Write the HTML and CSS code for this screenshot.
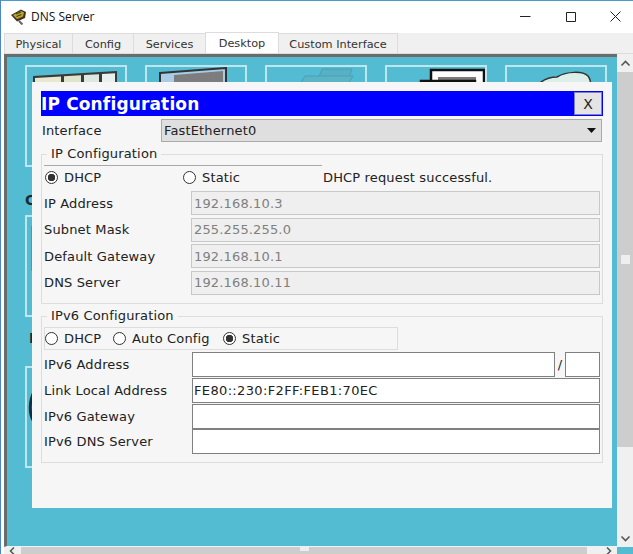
FILE: index.html
```html
<!DOCTYPE html>
<html lang="en">
<head>
    <meta charset="UTF-8">
    <title>DNS Server</title>
    <link rel="stylesheet" href="styles.css">
</head>
<body>
<div class="window">

    <!-- Title bar -->
    <div class="titlebar">
        <svg class="app-icon" width="17" height="17" viewBox="0 0 17 17">
            <path d="M9 13l3.5 3.5" stroke="#6b6156" stroke-width="2" fill="none"/>
            <path d="M1 7l10-5.500 5 2.500-1 6-8 3.500z" fill="#3a3226"/>
            <path d="M3 7l8-4 3 1.500-1 4-6 2.500z" fill="#c9a227"/>
            <path d="M6 6l5-2M6.500 8.500l5-2" stroke="#2d4a1e" stroke-width="1.300" fill="none"/>
        </svg>
        <span class="window-title">DNS Server</span>
        <div class="window-controls">
            <svg width="11" height="11" viewBox="0 0 11 11"><path d="M0 5.500h10.500" stroke="#222" fill="none"/></svg>
            <svg width="11" height="11" viewBox="0 0 11 11"><path d="M1.500 1.500h9v9h-9z" stroke="#222" fill="none"/></svg>
            <svg width="11" height="11" viewBox="0 0 11 11"><path d="M.5.500l10 10M10.500.500l-10 10" stroke="#222" fill="none"/></svg>
        </div>
    </div>

    <!-- Tabs -->
    <div class="tabs">
        <div class="tab tab-physical">Physical</div>
        <div class="tab tab-config">Config</div>
        <div class="tab tab-services">Services</div>
        <div class="tab tab-desktop">Desktop</div>
        <div class="tab tab-custom">Custom Interface</div>
    </div>

    <div class="frame">
        <div class="desktop">
            <div class="tile-row">
                <div class="tile">
                    <svg class="tile-art" viewBox="0 0 98 30">
                        <path d="M6 9L90 4V30H6z" fill="#3a3a3a"/>
                        <path d="M8 11L34 9.500V30H8z" fill="#e8e8cf"/>
                        <path d="M37 9.300L54 8.300V30H37z" fill="#e0e4cc"/>
                        <path d="M57 8.100L72 7.200V30H57z" fill="#dde9e0"/>
                        <path d="M75 7L88 6.200V30H75z" fill="#e8f0f0"/>
                    </svg>
                </div>
                <div class="tile">
                    <svg class="tile-art" viewBox="0 0 98 30">
                        <path d="M13 6L79 1V30H13z" fill="#a9cbe6" stroke="#333" stroke-width="2"/>
                        <path d="M27 8L76 4V30H27z" fill="#7d7d80"/>
                    </svg>
                </div>
                <div class="tile">
                    <svg class="tile-art" viewBox="0 0 98 30">
                        <path d="M55 2h30l-4 13H50z" fill="#57b0c4" stroke="#45a3b7"/>
                        <path d="M38 9h48l-5 8H33z" fill="#5cb3c6" stroke="#45a3b7"/>
                    </svg>
                </div>
                <div class="tile">
                    <svg class="tile-art" viewBox="0 0 98 30">
                        <path d="M44 3h53v27H44z" fill="#fff" stroke="#111" stroke-width="2.500"/>
                        <path d="M51 10h38v20H51z" fill="#7a7a78"/>
                        <path d="M34 14h54v16H34z" fill="#fff" stroke="#111" stroke-width="2.500"/>
                    </svg>
                </div>
                <div class="tile">
                    <svg class="tile-art" viewBox="0 0 98 30">
                        <path d="M23 30C28 17 38 10 50 10C60 4 76 4 81 9C85 14 84 24 83 30z" fill="#dcefe9" stroke="#333" stroke-width="1.500"/>
                        <path d="M27 30C34 20 44 15 54 15V30z" fill="#a8d4c6"/>
                    </svg>
                </div>
            </div>
            <div class="section-title section-title-first">C</div>
            <div class="tile-row">
                <div class="tile">
                    <svg class="tile-art" viewBox="0 0 98 98">
                        <path d="M6 9v45" stroke="#3a7f8f" stroke-width="3"/>
                    </svg>
                </div>
            </div>
            <div class="section-title section-title-second">I</div>
            <div class="tile-row">
                <div class="tile">
                    <svg class="tile-art" viewBox="0 0 98 98">
                        <path d="M7 24C2 34 2 46 7 54" stroke="#0f2f45" stroke-width="3" fill="none"/>
                    </svg>
                </div>
            </div>
        </div>

        <div class="vscroll">
            <div class="scroll-btn">
                <svg width="11" height="7" viewBox="0 0 11 7"><path d="M1.500 5.500l4-4 4 4" stroke="#555" stroke-width="1.600" fill="none"/></svg>
            </div>
            <div class="vscroll-thumb"><span class="vscroll-grip"></span></div>
            <div class="vscroll-rest"></div>
            <div class="scroll-btn">
                <svg width="11" height="7" viewBox="0 0 11 7"><path d="M1.500 1.500l4 4 4-4" stroke="#555" stroke-width="1.600" fill="none"/></svg>
            </div>
        </div>

        <div class="hscroll">
            <div class="hscroll-btn">
                <svg width="7" height="7" viewBox="0 0 7 7"><path d="M5 .500L1.500 4 5 7.500" stroke="#555" stroke-width="1.500" fill="none"/></svg>
            </div>
            <div class="hscroll-thumb"><span class="hscroll-grip"></span></div>
            <div class="hscroll-rest"></div>
            <div class="hscroll-btn">
                <svg width="7" height="7" viewBox="0 0 7 7"><path d="M2 .500L5.500 4 2 7.500" stroke="#555" stroke-width="1.500" fill="none"/></svg>
            </div>
        </div>
        <div class="corner"></div>

        <!-- IP Configuration dialog, sits over the desktop -->
        <div class="dialog">
            <div class="dialog-title">
                <span>IP Configuration</span>
                <button class="dialog-close">X</button>
            </div>

            <div class="interface-row">
                <label class="interface-label">Interface</label>
                <div class="select">
                    <span>FastEthernet0</span>
                    <svg width="9" height="5" viewBox="0 0 9 5"><path d="M0 0h9L4.500 5z" fill="#111"/></svg>
                </div>
            </div>

            <fieldset class="group group-v4">
                <legend>IP Configuration</legend>
                <div class="legend-rule"></div>
                <div class="mode-row">
                    <label class="mode mode-dhcp"><input type="radio" name="v4" class="radio" checked>DHCP</label>
                    <label class="mode mode-static"><input type="radio" name="v4" class="radio">Static</label>
                    <span class="status">DHCP request successful.</span>
                </div>
                <div class="field"><label>IP Address</label><input class="input-off" value="192.168.10.3" readonly></div>
                <div class="field"><label>Subnet Mask</label><input class="input-off" value="255.255.255.0" readonly></div>
                <div class="field"><label>Default Gateway</label><input class="input-off" value="192.168.10.1" readonly></div>
                <div class="field"><label>DNS Server</label><input class="input-off" value="192.168.10.11" readonly></div>
            </fieldset>

            <fieldset class="group group-v6">
                <legend>IPv6 Configuration</legend>
                <div class="mode-panel">
                    <label class="mode mode-v6-dhcp"><input type="radio" name="v6" class="radio">DHCP</label>
                    <label class="mode mode-v6-auto"><input type="radio" name="v6" class="radio">Auto Config</label>
                    <label class="mode"><input type="radio" name="v6" class="radio" checked>Static</label>
                </div>
                <div class="field field-v6">
                    <label>IPv6 Address</label>
                    <div class="address-pair">
                        <input class="input-on address-main">
                        <span class="slash">/</span>
                        <input class="input-on address-prefix">
                    </div>
                </div>
                <div class="field field-v6"><label>Link Local Address</label><input class="input-on" value="FE80::230:F2FF:FEB1:70EC"></div>
                <div class="field field-v6"><label>IPv6 Gateway</label><input class="input-on"></div>
                <div class="field field-v6"><label>IPv6 DNS Server</label><input class="input-on"></div>
            </fieldset>
        </div>
    </div>
</div>
</body>
</html>
```

FILE: styles.css
```css
html, body {
    margin: 0;
    padding: 0;
    height: 100%;
    overflow: hidden;
    background: #ffffff;
}

/* Outer window */
.window {
    width: 633px;
    height: 554px;
    box-sizing: border-box;
    border-top: 1px solid #4a9bd0;
    border-left: 1px solid #4a86c8;
    display: flex;
    flex-direction: column;
    background: #ffffff;
    font-family: "DejaVu Sans", Verdana, sans-serif;
    font-size: 13px;
    letter-spacing: 0.15px;
    color: #222222;
}

/* Title bar */
.titlebar {
    height: 31px;
    flex: none;
    display: flex;
    align-items: center;
    padding-left: 9px;
}

.app-icon {
    margin-right: 4px;
}

.window-title {
    font-family: "Open Sans", sans-serif;
    font-size: 12px;
    letter-spacing: 0;
    color: #111111;
}

.window-controls {
    margin-left: auto;
    display: flex;
    gap: 34px;
    padding-right: 12px;
}

/* Tabs */
.tabs {
    height: 21px;
    flex: none;
    display: flex;
    align-items: flex-end;
    margin-left: 3px;
    background: linear-gradient(#f0f0f0, #f0f0f0) no-repeat 0 1px;
}

.tab {
    height: 20px;
    box-sizing: border-box;
    border: 1px solid #dcdcdc;
    border-bottom: none;
    margin-right: -1px;
    background: #f0f0f0;
    text-align: center;
    line-height: 22px;
    font-size: 11.300px;
    letter-spacing: 0;
    color: #333333;
}

.tab-physical { width: 69px; }
.tab-config { width: 62px; }
.tab-services { width: 73px; }
.tab-custom { width: 120px; }

.tab-desktop {
    width: 74px;
    height: 21px;
    background: #ffffff;
    line-height: 21px;
    position: relative;
    z-index: 1;
}

/* Main frame */
.frame {
    flex: 1;
    min-height: 0;
    position: relative;
    margin-left: 3px;
    border-top: 1px solid #dddddd;
    display: grid;
    grid-template-columns: minmax(0, 1fr) 16px;
    grid-template-rows: minmax(0, 1fr) 7px;
}

.desktop {
    grid-column: 1;
    grid-row: 1;
    overflow: hidden;
    background: #53bcd3;
    border-top: 3px solid #6b6b6b;
    border-left: 3px solid #6b6b6b;
    border-bottom: 1px solid #e8f4f6;
    padding: 8px 0 0 18px;
}

.tile-row {
    display: flex;
    gap: 18px;
}

.tile {
    width: 102px;
    height: 102px;
    box-sizing: border-box;
    border: 2px solid #bde6ee;
    flex: none;
}

.tile-art {
    display: block;
    width: 98px;
}

.section-title {
    font-weight: bold;
    font-size: 14px;
    line-height: 16px;
    color: #1a2a33;
    white-space: nowrap;
}

.section-title-first {
    margin-top: 25px;
    margin-bottom: 7px;
}

.section-title-second {
    margin-top: 13px;
    margin-bottom: 20px;
    padding-left: 4px;
}

/* Scrollbars */
.vscroll {
    grid-column: 2;
    grid-row: 1;
    display: flex;
    flex-direction: column;
    background: #f0f0f0;
}

.scroll-btn {
    height: 18px;
    flex: none;
    display: flex;
    align-items: center;
    justify-content: center;
}

.vscroll-thumb {
    height: 375px;
    flex: none;
    background: #cdcdcd;
    display: flex;
    align-items: center;
    justify-content: center;
}

.vscroll-grip {
    width: 9px;
    height: 9px;
    background: #eeeeee;
}

.vscroll-rest {
    flex: 1;
}

.hscroll {
    grid-column: 1;
    grid-row: 2;
    display: flex;
    align-items: stretch;
    background: #f0f0f0;
}

.hscroll-btn {
    width: 17px;
    flex: none;
    display: flex;
    align-items: center;
    justify-content: center;
}

.hscroll-thumb {
    flex: 1;
    background: #cdcdcd;
    display: flex;
    justify-content: center;
}

.hscroll-rest {
    width: 13px;
    flex: none;
}

.hscroll-grip {
    width: 9px;
    height: 4px;
    background: #eeeeee;
}

.corner {
    grid-column: 2;
    grid-row: 2;
    background: #53bcd3;
}

/* Dialog */
.dialog {
    position: absolute;
    left: 28px;
    top: 28px;
    width: 580px;
    height: 426px;
    box-sizing: border-box;
    padding: 9px;
    background: #f6f6f6;
}

.dialog-title {
    height: 25px;
    display: flex;
    align-items: center;
    justify-content: space-between;
    background: #0000ff;
    color: #ffffff;
    font-size: 17px;
    font-weight: bold;
}

.dialog-close {
    width: 28px;
    height: 23px;
    margin-right: 1px;
    padding: 0;
    border: 1px solid #8080c0;
    background: #e4e4e4;
    font-family: "DejaVu Sans", Verdana, sans-serif;
    font-size: 14px;
    color: #222222;
}

.interface-row {
    display: flex;
    align-items: center;
    margin-top: 3px;
    height: 23px;
}

.interface-label {
    width: 119px;
    padding-left: 1px;
}

.select {
    flex: 1;
    height: 23px;
    margin-right: 1px;
    box-sizing: border-box;
    border: 1px solid #aaaaaa;
    background: #dfdfdf;
    display: flex;
    align-items: center;
    justify-content: space-between;
    padding: 0 5px 0 2px;
}

/* Group boxes */
.group {
    margin: 4px 0 0;
    padding: 0 2px;
    min-width: 0;
    border: 1px solid #dddddd;
    position: relative;
}

.group legend {
    margin-left: 3px;
    padding: 0 4px;
    line-height: 16px;
}

.group-v4 {
    height: 158px;
    box-sizing: border-box;
}

.group-v6 {
    margin-top: 4px;
    height: 155px;
    box-sizing: border-box;
}

.legend-rule {
    position: absolute;
    left: 2px;
    top: 3px;
    width: 278px;
    height: 1px;
    background: #aaaaaa;
}

.mode-row {
    display: flex;
    align-items: center;
    height: 26px;
    margin-top: 2px;
}

.mode-panel {
    display: flex;
    align-items: center;
    height: 23px;
    width: 354px;
    box-sizing: border-box;
    border: 1px solid #dddddd;
    margin-top: 3px;
    margin-bottom: 2px;
}

.mode {
    display: flex;
    align-items: center;
    gap: 6px;
}

.mode-dhcp { width: 138px; padding-left: 1px; }
.mode-static { width: 140px; }
.mode-v6-dhcp { width: 68px; }
.mode-v6-auto { width: 110px; }

.radio {
    appearance: none;
    width: 13px;
    height: 13px;
    margin: 0;
    border: 1px solid #333333;
    border-radius: 50%;
    background: #ffffff;
    flex: none;
}

.radio:checked {
    background: radial-gradient(circle, #333333 0 3.500px, #ffffff 4px);
}

.field {
    display: flex;
    align-items: center;
    height: 26.500px;
}

.field label {
    width: 147px;
    flex: none;
}

.field input {
    flex: 1;
    min-width: 0;
    height: 24px;
    box-sizing: border-box;
    padding: 0 2px;
    font-family: "DejaVu Sans", Verdana, sans-serif;
    font-size: 13px;
    letter-spacing: 0.15px;
    outline: none;
}

.field-v6 {
    height: 25.670px;
}

.field-v6 label {
    width: 148px;
}

.field-v6 input {
    height: 25px;
}

.input-off {
    border: 1px solid #c8c8c8;
    background: #efefef;
    color: #808080;
}

.field .input-on {
    border: 1px solid #808080;
    background: #ffffff;
    color: #222222;
    padding-left: 1px;
    letter-spacing: 0.35px;
}

.address-pair {
    flex: 1;
    min-width: 0;
    display: flex;
    align-items: center;
}

.address-pair .address-main {
    flex: none;
    width: 363px;
}

.slash {
    width: 10px;
    text-align: center;
}

.address-pair .address-prefix {
    flex: 1;
}
```
